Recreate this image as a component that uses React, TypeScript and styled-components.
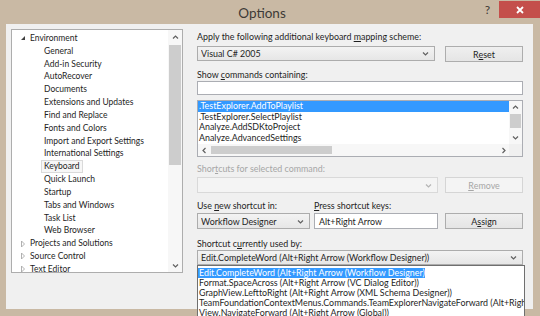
import React from 'react'
import styled, {createGlobalStyle, css} from 'styled-components'

const FONT = `Lato, 'Open Sans', sans-serif`

const GlobalStyle = createGlobalStyle`
  html, body {
    margin: 0;
    padding: 0;
    background: #c9b9a4;
    overflow: hidden;
  }
  #root {
    width: 540px;
    height: 316px;
  }
`

const Window = styled.div`
  width: 540px;
  height: 316px;
  background: #c9b9a4;
  font-family: ${FONT};
  font-size: 8.9px;
  color: #1e1e1e;
  display: flex;
  flex-direction: column;
`

const TitleBar = styled.div`
  height: 24px;
  display: flex;
  align-items: flex-start;
`

const Title = styled.div`
  flex: 1;
  padding-left: 47px;
  text-align: center;
  line-height: 26px;
  font-size: 13.5px;
  color: #3d3a36;
`

const Help = styled.div`
  width: 21px;
  text-align: center;
  line-height: 20px;
  font-size: 12px;
  color: #3d3a36;
`

const Close = styled.div`
  width: 41px;
  height: 17px;
  margin: 1px 0 0 1px;
  background: #c44f4b;
  display: flex;
  align-items: center;
  justify-content: center;
`

const Client = styled.div`
  flex: 1;
  margin: 0 7px 7px 6px;
  padding: 5px 0 0 5px;
  background: #f0f0f0;
  display: flex;
  align-items: flex-start;
  gap: 14px;
`

/* ---------- tree ---------- */

const Tree = styled.div`
  width: 172px;
  height: 244px;
  box-sizing: border-box;
  border: 1px solid #adadad;
  background: #fff;
  display: flex;
  overflow: hidden;
  font-size: 8.5px;
`

const TreeBody = styled.div`
  flex: 1;
  padding-top: 2px;
  overflow: hidden;
`

const TreeRow = styled.div<{$level: number}>`
  height: 12.83px;
  line-height: 12.83px;
  display: flex;
  align-items: center;
  white-space: nowrap;
  padding-left: ${({$level}) => ($level === 0 ? 7 : 32)}px;
`

const Expander = styled.span`
  width: 8px;
  height: 8px;
  margin-right: 3px;
  display: flex;
  align-items: center;
  justify-content: center;
`

const TreeLabel = styled.span<{$selected?: boolean}>`
  ${({$selected}) =>
    $selected &&
    css`
      margin-left: -3px;
      padding: 0 2px;
      border: 1px solid #dadada;
      background: #f7f7f7;
      line-height: 11px;
    `}
`

const VScroll = styled.div<{$width: number}>`
  width: ${({$width}) => $width}px;
  background: #f7f7f7;
  display: flex;
  flex-direction: column;
`

const ScrollBtn = styled.div<{$size: number}>`
  height: ${({$size}) => $size}px;
  flex: 0 0 ${({$size}) => $size}px;
  display: flex;
  align-items: center;
  justify-content: center;
`

const VThumb = styled.div<{$top: number; $height: number}>`
  margin: ${({$top}) => $top}px 1px 0;
  height: ${({$height}) => $height}px;
  background: #cdcdcd;
`

const Spacer = styled.div`
  flex: 1;
`

/* ---------- right panel ---------- */

const Panel = styled.div`
  width: 326px;
  padding-top: 1px;
  display: flex;
  flex-direction: column;
`

const Label = styled.div<{$top: number; $disabled?: boolean; $width?: number}>`
  height: 12px;
  line-height: 12px;
  margin-top: ${({$top}) => $top}px;
  white-space: nowrap;
  color: ${({$disabled}) => ($disabled ? '#a6a6a6' : '#1e1e1e')};
  ${({$width}) =>
    $width &&
    css`
      width: ${$width}px;
      margin-top: 0;
    `}
`

const Row = styled.div<{$top: number}>`
  display: flex;
  margin-top: ${({$top}) => $top}px;
`

const LabelRow = styled(Row)`
  height: 12px;
`

const Combo = styled.div<{$width: number; $disabled?: boolean; $height?: number}>`
  width: ${({$width}) => $width}px;
  height: ${({$height}) => $height ?? 16}px;
  box-sizing: border-box;
  border: 1px solid #acacac;
  background: linear-gradient(#f3f3f3, #e6e6e6);
  display: flex;
  align-items: center;
  padding: 0 5px 0 3px;
  white-space: nowrap;
  ${({$disabled}) =>
    $disabled &&
    css`
      border-color: #d9d9d9;
      background: #f4f4f4;
      color: #a6a6a6;
    `}
`

const ComboText = styled.span`
  flex: 1;
  overflow: hidden;
`

const Button = styled.div<{$disabled?: boolean}>`
  width: 78px;
  height: 16px;
  margin-left: auto;
  box-sizing: border-box;
  border: 1px solid #adadad;
  background: linear-gradient(#efefef, #e5e5e5);
  display: flex;
  align-items: center;
  justify-content: center;
  ${({$disabled}) =>
    $disabled &&
    css`
      border-color: #d5d5d5;
      background: #f4f4f4;
      color: #a6a6a6;
    `}
`

const TextBox = styled.div<{$width?: number; $height: number; $left?: number}>`
  width: ${({$width}) => ($width ? `${$width}px` : '100%')};
  height: ${({$height}) => $height}px;
  margin-left: ${({$left}) => $left ?? 0}px;
  box-sizing: border-box;
  border: 1px solid #abadb3;
  background: #fff;
  display: flex;
  align-items: center;
  padding-left: 4px;
  white-space: nowrap;
`

const ListBox = styled.div`
  margin-top: 5px;
  height: 57px;
  box-sizing: border-box;
  border: 1px solid #abadb3;
  background: #fff;
  display: grid;
  grid-template-columns: 1fr 13px;
  grid-template-rows: 43px 12px;
`

const ListItems = styled.div`
  overflow: hidden;
`

const ListItem = styled.div<{$selected?: boolean; $height: number; $width?: number}>`
  height: ${({$height}) => $height}px;
  line-height: ${({$height}) => $height}px;
  padding-left: 1px;
  white-space: nowrap;
  ${({$width}) =>
    $width &&
    css`
      width: ${$width}px;
    `}
  ${({$selected}) =>
    $selected &&
    css`
      background: #3399ff;
      color: #fff;
    `}
`

const HScroll = styled.div`
  background: #f7f7f7;
  display: flex;
  align-items: stretch;
`

const HThumb = styled.div`
  width: 121px;
  margin: 2px 0 2px 1px;
  background: #cdcdcd;
`

const HBtn = styled.div`
  width: 12px;
  display: flex;
  align-items: center;
  justify-content: center;
`

const Corner = styled.div`
  background: #f0f0f0;
`

const DropWrap = styled.div`
  position: relative;
`

const Popup = styled.div`
  position: absolute;
  top: 15px;
  left: 0;
  width: 328px;
  height: 60px;
  box-sizing: border-box;
  border: 1px solid #6f6f6f;
  border-bottom: none;
  background: #fff;
  padding-top: 2px;
  overflow: hidden;
`

/* ---------- icons ---------- */

type Dir = 'up' | 'down' | 'left' | 'right'

const chevronPaths: Record<Dir, string> = {
  up: 'M1 4.5 L3.5 2 L6 4.5',
  down: 'M1 2.5 L3.5 5 L6 2.5',
  left: 'M4.5 1 L2 3.5 L4.5 6',
  right: 'M2.5 1 L5 3.5 L2.5 6',
}

const Chevron = ({dir, color = '#606060'}: {dir: Dir; color?: string}) => (
  <svg width="7" height="7" viewBox="0 0 7 7">
    <path d={chevronPaths[dir]} fill="none" stroke={color} strokeWidth="1.2" />
  </svg>
)

const ExpandedGlyph = () => (
  <svg width="6" height="6" viewBox="0 0 6 6">
    <path d="M5 1 L5 5 L1 5 Z" fill="#404040" />
  </svg>
)

const CollapsedGlyph = () => (
  <svg width="6" height="8" viewBox="0 0 6 8">
    <path d="M1.5 1 L4.5 4 L1.5 7 Z" fill="none" stroke="#a8a8a8" strokeWidth="0.9" />
  </svg>
)

const CloseGlyph = () => (
  <svg width="8" height="8" viewBox="0 0 8 8">
    <path d="M1 1 L7 7 M7 1 L1 7" stroke="#fff" strokeWidth="1.8" />
  </svg>
)

/* ---------- data ---------- */

type Node = {label: string; level: number; state?: 'open' | 'closed'; selected?: boolean}

const tree: Node[] = [
  {label: 'Environment', level: 0, state: 'open'},
  {label: 'General', level: 1},
  {label: 'Add-in Security', level: 1},
  {label: 'AutoRecover', level: 1},
  {label: 'Documents', level: 1},
  {label: 'Extensions and Updates', level: 1},
  {label: 'Find and Replace', level: 1},
  {label: 'Fonts and Colors', level: 1},
  {label: 'Import and Export Settings', level: 1},
  {label: 'International Settings', level: 1},
  {label: 'Keyboard', level: 1, selected: true},
  {label: 'Quick Launch', level: 1},
  {label: 'Startup', level: 1},
  {label: 'Tabs and Windows', level: 1},
  {label: 'Task List', level: 1},
  {label: 'Web Browser', level: 1},
  {label: 'Projects and Solutions', level: 0, state: 'closed'},
  {label: 'Source Control', level: 0, state: 'closed'},
  {label: 'Text Editor', level: 0, state: 'closed'},
]

const commands = [
  '.TestExplorer.AddToPlaylist',
  '.TestExplorer.SelectPlaylist',
  'Analyze.AddSDKtoProject',
  'Analyze.AdvancedSettings',
]

const usedBy = [
  'Edit.CompleteWord (Alt+Right Arrow (Workflow Designer))',
  'Format.SpaceAcross (Alt+Right Arrow (VC Dialog Editor))',
  'GraphView.LefttoRight (Alt+Right Arrow (XML Schema Designer))',
  'TeamFoundationContextMenus.Commands.TeamExplorerNavigateForward (Alt+Right Arrow (Global))',
  'View.NavigateForward (Alt+Right Arrow (Global))',
]

export default function App() {
  return (
    <Window>
      <GlobalStyle />
      <TitleBar>
        <Title>Options</Title>
        <Help>?</Help>
        <Close>
          <CloseGlyph />
        </Close>
      </TitleBar>

      <Client>
        <Tree>
          <TreeBody>
            {tree.map((n) => (
              <TreeRow key={n.label} $level={n.level}>
                {n.level === 0 && (
                  <Expander>{n.state === 'open' ? <ExpandedGlyph /> : <CollapsedGlyph />}</Expander>
                )}
                <TreeLabel $selected={n.selected}>{n.label}</TreeLabel>
              </TreeRow>
            ))}
          </TreeBody>
          <VScroll $width={14}>
            <ScrollBtn $size={15}>
              <Chevron dir="up" />
            </ScrollBtn>
            <VThumb $top={0} $height={120} />
            <Spacer />
            <ScrollBtn $size={14}>
              <Chevron dir="down" />
            </ScrollBtn>
          </VScroll>
        </Tree>

        <Panel>
          <Label $top={1}>
            Apply the following additional keyboard <u>m</u>apping scheme:
          </Label>
          <Row $top={3}>
            <Combo $width={238} $height={15}>
              <ComboText>Visual C# 2005</ComboText>
              <Chevron dir="down" />
            </Combo>
            <Button>
              R<u>e</u>set
            </Button>
          </Row>

          <Label $top={7}>
            Show <u>c</u>ommands containing:
          </Label>
          <TextBox $height={14} />

          <ListBox>
            <ListItems>
              {commands.map((c, i) => (
                <ListItem key={c} $height={10.5} $selected={i === 0}>
                  {c}
                </ListItem>
              ))}
            </ListItems>
            <VScroll $width={13}>
              <ScrollBtn $size={12}>
                <Chevron dir="up" />
              </ScrollBtn>
              <VThumb $top={1} $height={14} />
              <Spacer />
              <ScrollBtn $size={14}>
                <Chevron dir="down" />
              </ScrollBtn>
            </VScroll>
            <HScroll>
              <HBtn>
                <Chevron dir="left" />
              </HBtn>
              <HThumb />
              <Spacer />
              <HBtn>
                <Chevron dir="right" />
              </HBtn>
            </HScroll>
            <Corner />
          </ListBox>

          <Label $top={6} $disabled>
            Shor<u>t</u>cuts for selected command:
          </Label>
          <Row $top={2}>
            <Combo $width={241} $disabled>
              <ComboText />
              <Chevron dir="down" color="#b4b4b4" />
            </Combo>
            <Button $disabled>
              <u>R</u>emove
            </Button>
          </Row>

          <LabelRow $top={7}>
            <Label $top={0} $width={117}>
              Use <u>n</u>ew shortcut in:
            </Label>
            <Label $top={0}>
              <u>P</u>ress shortcut keys:
            </Label>
          </LabelRow>
          <Row $top={1}>
            <Combo $width={113}>
              <ComboText>Workflow Designer</ComboText>
              <Chevron dir="down" />
            </Combo>
            <TextBox $width={124} $height={16} $left={4}>
              Alt+Right Arrow
            </TextBox>
            <Button>
              A<u>s</u>sign
            </Button>
          </Row>

          <Label $top={9}>
            Shortcut c<u>u</u>rrently used by:
          </Label>
          <DropWrap>
            <Combo $width={326} $height={15}>
              <ComboText>Edit.CompleteWord (Alt+Right Arrow (Workflow Designer))</ComboText>
              <Chevron dir="down" />
            </Combo>
            <Popup>
              {usedBy.map((u, i) => (
                <ListItem key={u} $height={10} $selected={i === 0} $width={i === 0 ? 226 : undefined}>
                  {u}
                </ListItem>
              ))}
            </Popup>
          </DropWrap>
        </Panel>
      </Client>
    </Window>
  )
}
